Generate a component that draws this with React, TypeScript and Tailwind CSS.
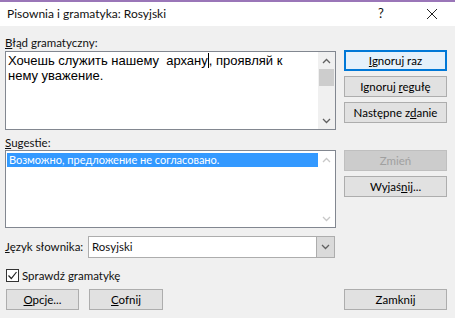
import { ReactNode } from 'react'

const ui = { fontFamily: 'Lato, "Noto Sans", sans-serif' }
const arial = { fontFamily: '"Liberation Sans", Arial, sans-serif' }

function Btn({ children, def, disabled, className = '' }: { children: ReactNode; def?: boolean; disabled?: boolean; className?: string }) {
  const base = 'h-[21px] flex items-center justify-center text-[11.5px] leading-none'
  if (disabled) {
    return <div className={`${base} bg-[#cccccc] border border-[#bfbfbf] text-[#a0a0a0] ${className}`}>{children}</div>
  }
  if (def) {
    return <div className={`${base} bg-[#e5f1fb] border-2 border-[#0078d7] text-black ${className}`}>{children}</div>
  }
  return <div className={`${base} bg-[#e1e1e1] border border-[#adadad] text-black ${className}`}>{children}</div>
}

function Chevron({ up, color = '#606060' }: { up?: boolean; color?: string }) {
  return (
    <svg width="9" height="6" viewBox="0 0 9 6">
      <path d={up ? 'M1 5 L4.5 1.5 L8 5' : 'M1 1 L4.5 4.5 L8 1'} fill="none" stroke={color} strokeWidth="1.3" />
    </svg>
  )
}

export default function App() {
  return (
    <div className="w-[455px] h-[318px] bg-[#f0f0f0] overflow-hidden text-[#111]" style={ui}>
      <div className="h-[2px] bg-[#9a76b8]" />
      <div className="h-[24px] bg-white flex items-center pl-[7px]">
        <span className="text-[12px] flex-1">Pisownia i gramatyka: Rosyjski</span>
        <span className="text-[13px] w-[10px] mr-[38px]">?</span>
        <svg width="12" height="12" viewBox="0 0 12 12" className="mr-[17px]">
          <path d="M1 1 L11 11 M11 1 L1 11" stroke="#222" strokeWidth="1" />
        </svg>
      </div>

      <div className="flex px-[5px]">
        <div className="w-[331px]">
          <div className="h-[15px] mt-[9px] text-[11.5px] leading-[15px]"><u>B</u>łąd gramatyczny:</div>
          <div className="mt-[1px] h-[79px] bg-white border border-[#828790] flex">
            <div className="flex-1 pl-[2px] pt-[1px] text-[13px] leading-[15px] text-black" style={arial}>
              Хочешь служить нашему&nbsp; архану<span className="inline-block w-[1px] h-[15px] bg-black align-top" />, проявляй к<br />
              нему уважение.
            </div>
            <div className="w-[17px] bg-[#f0f0f0] flex flex-col items-center">
              <div className="h-[17px] flex items-center justify-center"><Chevron up /></div>
              <div className="w-[15px] h-[17px] bg-[#cdcdcd]" />
              <div className="flex-1" />
              <div className="h-[17px] flex items-center justify-center"><Chevron /></div>
            </div>
          </div>

          <div className="h-[15px] mt-[5px] text-[11.5px] leading-[15px]"><u>S</u>ugestie:</div>
          <div className="h-[78px] bg-white border border-[#828790] flex">
            <div className="flex-1 pl-[1px] pt-[2px]">
              <div className="h-[14px] bg-[#3399ff] text-white text-[11px] leading-[14px] pl-[2px]">Возможно, предложение не согласовано.</div>
            </div>
            <div className="w-[17px] bg-white flex flex-col items-center">
              <div className="h-[17px] flex items-center justify-center"><Chevron up color="#c8c8c8" /></div>
              <div className="flex-1" />
              <div className="h-[17px] flex items-center justify-center"><Chevron color="#c8c8c8" /></div>
            </div>
          </div>
        </div>

        <div className="ml-[8px] w-[103px] pt-[24px] flex flex-col">
          <Btn def><span><u>I</u>gnoruj raz</span></Btn>
          <Btn className="mt-[5px]"><span>Ignoruj <u>r</u>egułę</span></Btn>
          <Btn className="mt-[5px]"><span>Następne z<u>d</u>anie</span></Btn>
          <Btn disabled className="mt-[27px]">Zmień</Btn>
          <Btn className="mt-[5px]"><span>Wyjaś<u>n</u>ij...</span></Btn>
        </div>
      </div>

      <div className="flex items-center px-[5px] mt-[8px]">
        <div className="w-[83px] text-[11.5px]"><u>J</u>ęzyk słownika:</div>
        <div className="w-[247px] h-[22px] bg-white border border-[#adadad] flex">
          <div className="flex-1 text-[11.5px] leading-[20px] pl-[3px]">Rosyjski</div>
          <div className="w-[18px] bg-[#dadada] border-l border-[#adadad] flex items-center justify-center"><Chevron /></div>
        </div>
      </div>

      <div className="flex items-center px-[6px] mt-[11px] h-[13px]">
        <div className="w-[13px] h-[13px] bg-white border border-[#333] flex items-center justify-center">
          <svg width="11" height="11" viewBox="0 0 11 11">
            <path d="M1.5 5.5 L4.3 8.5 L9.5 2" fill="none" stroke="#222" strokeWidth="1.2" />
          </svg>
        </div>
        <span className="ml-[3px] text-[11.5px]">Sprawdź <u>g</u>ramatykę</span>
      </div>

      <div className="flex px-[6px] mt-[7px]">
        <Btn className="w-[73px]"><span><u>O</u>pcje...</span></Btn>
        <Btn className="w-[74px] ml-[10px]"><span><u>C</u>ofnij</span></Btn>
        <div className="flex-1" />
        <Btn className="w-[103px] mr-[2px]">Zamknij</Btn>
      </div>
    </div>
  )
}
